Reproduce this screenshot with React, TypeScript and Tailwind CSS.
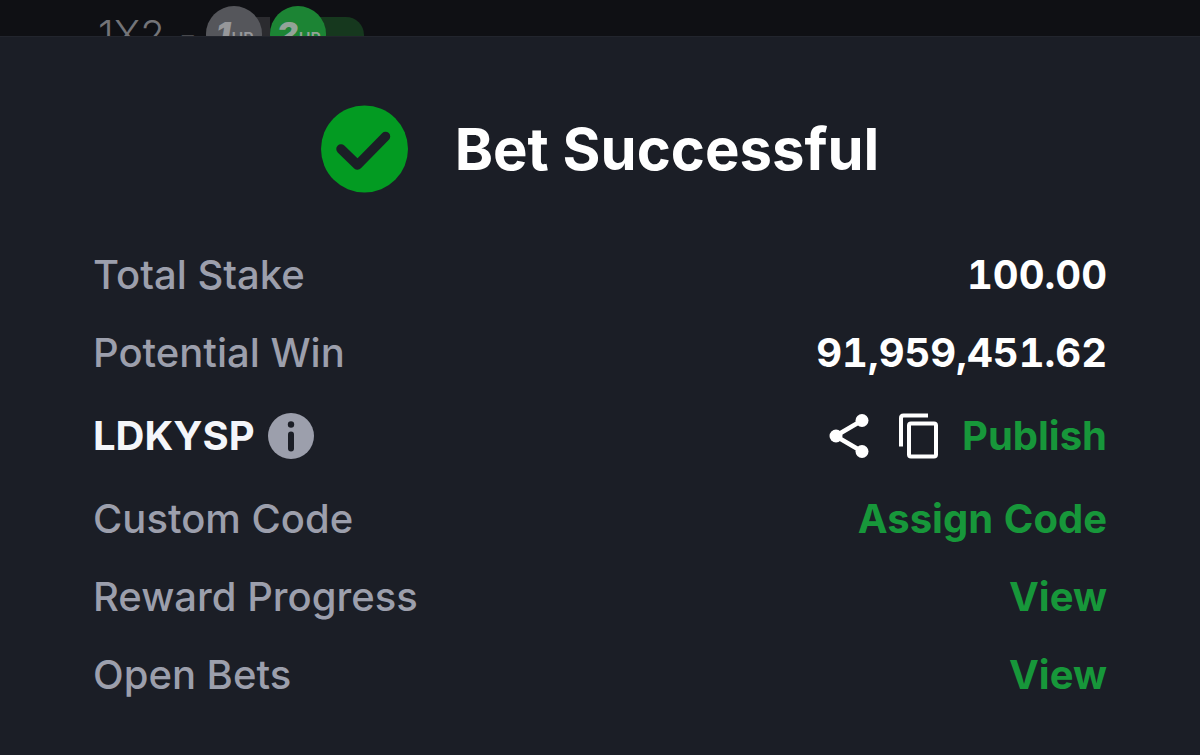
import type { ReactNode } from "react";

function CheckIcon() {
  return (
    <svg viewBox="0 0 88 88" className="size-[88px] shrink-0" aria-hidden="true">
      <circle cx="43.5" cy="44" r="43.5" fill="#039b22" />
      <path
        d="M20 44 36.5 60 64.5 31.5"
        fill="none"
        stroke="#1b1e26"
        strokeWidth="9.5"
        strokeLinecap="round"
        strokeLinejoin="round"
      />
    </svg>
  );
}

function InfoIcon() {
  return (
    <svg viewBox="0 0 46 46" className="size-[46px]" aria-hidden="true">
      <circle cx="23" cy="23" r="23" fill="#9c9fac" />
      <circle cx="23" cy="11.5" r="3.2" fill="#1b1e26" />
      <path d="M23 21.5v14" stroke="#1b1e26" strokeWidth="6" strokeLinecap="round" />
    </svg>
  );
}

function ShareIcon() {
  return (
    <svg viewBox="0 0 40 46" className="h-[46px] w-10" aria-hidden="true">
      <path d="M33 7.5 6.5 23 33 38.5" fill="none" stroke="#fff" strokeWidth="4.5" />
      <g fill="#fff">
        <circle cx="33" cy="7.5" r="6.5" />
        <circle cx="7" cy="23" r="6.5" />
        <circle cx="33" cy="38.5" r="6.5" />
      </g>
    </svg>
  );
}

function CopyIcon() {
  return (
    <svg viewBox="0 0 40 46" className="h-[46px] w-10" aria-hidden="true">
      <g fill="none" stroke="#fff" strokeWidth="4">
        <path d="M2 33.5V5Q2 2.5 4.5 2.5H29" />
        <rect x="10" y="10.5" width="27" height="33" rx="2" />
      </g>
    </svg>
  );
}

function Row({ label, children }: { label: string; children: ReactNode }) {
  return (
    <div className="flex h-[78px] items-center justify-between">
      <dt className="font-medium text-[#9c9fac]">{label}</dt>
      <dd className="font-bold text-white tabular-nums">{children}</dd>
    </div>
  );
}

function Action({ children }: { children: ReactNode }) {
  return (
    <button type="button" className="font-bold text-[#17973a]">
      {children}
    </button>
  );
}

export default function App() {
  return (
    <div className="flex min-h-screen flex-col bg-[#0f1014] font-['Inter',sans-serif]">
      {/* market header dimmed behind the sheet */}
      <div className="flex h-9 items-start overflow-hidden pl-[98px] text-[#737478]">
        <span className="pt-[11px] text-[40px] leading-[48px] font-light">1X2</span>
        <span className="ml-[14px] pt-[11px] text-[40px] leading-[48px] font-light">-</span>
        <div className="ml-[9px] flex pt-[6px]">
          <div className="relative z-10 flex size-14 items-center justify-center gap-px rounded-full bg-[#55565b] pl-[2px] text-[#96979a]">
            <span className="text-[32px] leading-8 font-black italic">1</span>
            <span className="pt-2 text-base font-semibold">UP</span>
          </div>
          <div className="-ml-7 mt-[11px] h-9 w-9 bg-[#2b2b2f]" />
          <div className="relative z-10 flex size-14 items-center justify-center gap-px rounded-full bg-[#1c8434] pl-[2px] text-[#93a398]">
            <span className="text-[32px] leading-8 font-black italic">2</span>
            <span className="pt-2 text-base font-semibold">UP</span>
          </div>
          <div className="-ml-7 mt-[11px] h-9 w-[66px] rounded-r-full bg-[#16381e]" />
        </div>
      </div>

      <main className="flex-1 border-t border-[#22252d] bg-[#1b1e26] px-[93px] pt-[68px] pb-10">
        <div className="mb-[43px] flex items-center justify-center gap-[46px]">
          <CheckIcon />
          <h1 className="text-[58px] leading-[80px] font-bold text-white">Bet Successful</h1>
        </div>

        <dl className="text-[40px] leading-[48px]">
          <Row label="Total Stake">100.00</Row>
          <Row label="Potential Win">91,959,451.62</Row>

          <div className="flex h-[88px] items-center justify-between">
            <dt className="flex items-center gap-[13px] font-bold text-[#f4f6fa]">
              LDKYSP
              <button type="button" aria-label="About booking code">
                <InfoIcon />
              </button>
            </dt>
            <dd className="flex items-center">
              <button type="button" aria-label="Share" className="mr-[30px]">
                <ShareIcon />
              </button>
              <button type="button" aria-label="Copy" className="mr-[23px]">
                <CopyIcon />
              </button>
              <Action>Publish</Action>
            </dd>
          </div>

          <Row label="Custom Code">
            <Action>Assign Code</Action>
          </Row>
          <Row label="Reward Progress">
            <Action>View</Action>
          </Row>
          <Row label="Open Bets">
            <Action>View</Action>
          </Row>
        </dl>
      </main>
    </div>
  );
}
